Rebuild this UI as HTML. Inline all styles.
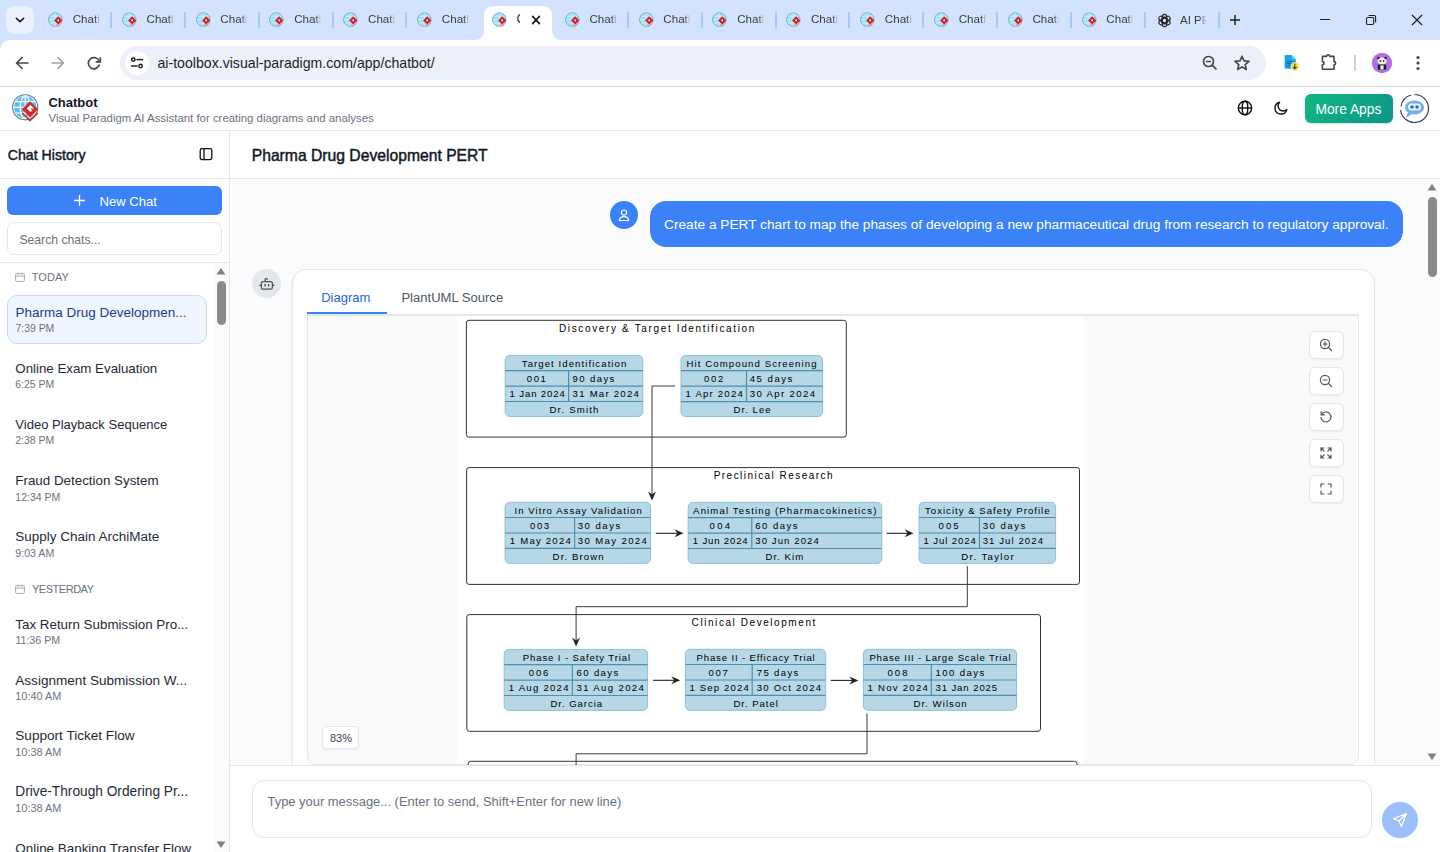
<!DOCTYPE html><html><head><meta charset="utf-8"><style>
*{margin:0;padding:0;box-sizing:border-box}
html,body{width:1440px;height:852px;overflow:hidden;background:#fff;font-family:"Liberation Sans",sans-serif}
.t{position:absolute;white-space:nowrap;line-height:1}
.b{position:absolute}
svg{position:absolute;overflow:visible}
</style></head><body>
<div class="b" style="left:0px;top:0px;width:1440px;height:40px;background:#d3e3fd"></div>
<div class="b" style="left:6px;top:6px;width:28px;height:28px;background:#eaf1fd;border-radius:8px"></div>
<svg style="left:0;top:0" width="40" height="40"><path d="M16.4 18.3 L20 21.7 L23.6 18.3" fill="none" stroke="#1f1f1f" stroke-width="1.6" stroke-linecap="round" stroke-linejoin="round"/></svg>
<svg style="left:48.00px;top:11.50px" width="16" height="16" viewBox="0 0 16 16"><circle cx="7.3" cy="7.6" r="6.8" fill="#9fe3fb" stroke="#7aa7bd" stroke-width="0.9"/><path d="M1 7.6H13.6M7.3 1V14.2M2.2 4.3H12.4M2.2 11H12.4" stroke="#d6f3fd" stroke-width="0.7"/><path d="M10.2 4.2L14.4 8.4L10.2 12.6L6 8.4Z" fill="#d61f26"/><path d="M6.4 11L10.2 14.8L14 11L10.2 13.2Z" fill="#f08a8a"/><path d="M9.4 7.6L11 7.6L11 9.2L9.4 9.2Z" fill="#fff"/></svg>
<div class="t" style="left:72.70px;top:11.2px;font-size:11.6px;line-height:16px;color:#3c3c3c;width:27px;overflow:hidden;-webkit-mask-image:linear-gradient(90deg,#000 80%,transparent 100%)">Chatbot</div>
<svg style="left:121.83px;top:11.50px" width="16" height="16" viewBox="0 0 16 16"><circle cx="7.3" cy="7.6" r="6.8" fill="#9fe3fb" stroke="#7aa7bd" stroke-width="0.9"/><path d="M1 7.6H13.6M7.3 1V14.2M2.2 4.3H12.4M2.2 11H12.4" stroke="#d6f3fd" stroke-width="0.7"/><path d="M10.2 4.2L14.4 8.4L10.2 12.6L6 8.4Z" fill="#d61f26"/><path d="M6.4 11L10.2 14.8L14 11L10.2 13.2Z" fill="#f08a8a"/><path d="M9.4 7.6L11 7.6L11 9.2L9.4 9.2Z" fill="#fff"/></svg>
<div class="t" style="left:146.53px;top:11.2px;font-size:11.6px;line-height:16px;color:#3c3c3c;width:27px;overflow:hidden;-webkit-mask-image:linear-gradient(90deg,#000 80%,transparent 100%)">Chatbot</div>
<svg style="left:195.66px;top:11.50px" width="16" height="16" viewBox="0 0 16 16"><circle cx="7.3" cy="7.6" r="6.8" fill="#9fe3fb" stroke="#7aa7bd" stroke-width="0.9"/><path d="M1 7.6H13.6M7.3 1V14.2M2.2 4.3H12.4M2.2 11H12.4" stroke="#d6f3fd" stroke-width="0.7"/><path d="M10.2 4.2L14.4 8.4L10.2 12.6L6 8.4Z" fill="#d61f26"/><path d="M6.4 11L10.2 14.8L14 11L10.2 13.2Z" fill="#f08a8a"/><path d="M9.4 7.6L11 7.6L11 9.2L9.4 9.2Z" fill="#fff"/></svg>
<div class="t" style="left:220.36px;top:11.2px;font-size:11.6px;line-height:16px;color:#3c3c3c;width:27px;overflow:hidden;-webkit-mask-image:linear-gradient(90deg,#000 80%,transparent 100%)">Chatbot</div>
<svg style="left:269.49px;top:11.50px" width="16" height="16" viewBox="0 0 16 16"><circle cx="7.3" cy="7.6" r="6.8" fill="#9fe3fb" stroke="#7aa7bd" stroke-width="0.9"/><path d="M1 7.6H13.6M7.3 1V14.2M2.2 4.3H12.4M2.2 11H12.4" stroke="#d6f3fd" stroke-width="0.7"/><path d="M10.2 4.2L14.4 8.4L10.2 12.6L6 8.4Z" fill="#d61f26"/><path d="M6.4 11L10.2 14.8L14 11L10.2 13.2Z" fill="#f08a8a"/><path d="M9.4 7.6L11 7.6L11 9.2L9.4 9.2Z" fill="#fff"/></svg>
<div class="t" style="left:294.19px;top:11.2px;font-size:11.6px;line-height:16px;color:#3c3c3c;width:27px;overflow:hidden;-webkit-mask-image:linear-gradient(90deg,#000 80%,transparent 100%)">Chatbot</div>
<svg style="left:343.32px;top:11.50px" width="16" height="16" viewBox="0 0 16 16"><circle cx="7.3" cy="7.6" r="6.8" fill="#9fe3fb" stroke="#7aa7bd" stroke-width="0.9"/><path d="M1 7.6H13.6M7.3 1V14.2M2.2 4.3H12.4M2.2 11H12.4" stroke="#d6f3fd" stroke-width="0.7"/><path d="M10.2 4.2L14.4 8.4L10.2 12.6L6 8.4Z" fill="#d61f26"/><path d="M6.4 11L10.2 14.8L14 11L10.2 13.2Z" fill="#f08a8a"/><path d="M9.4 7.6L11 7.6L11 9.2L9.4 9.2Z" fill="#fff"/></svg>
<div class="t" style="left:368.02px;top:11.2px;font-size:11.6px;line-height:16px;color:#3c3c3c;width:27px;overflow:hidden;-webkit-mask-image:linear-gradient(90deg,#000 80%,transparent 100%)">Chatbot</div>
<svg style="left:417.15px;top:11.50px" width="16" height="16" viewBox="0 0 16 16"><circle cx="7.3" cy="7.6" r="6.8" fill="#9fe3fb" stroke="#7aa7bd" stroke-width="0.9"/><path d="M1 7.6H13.6M7.3 1V14.2M2.2 4.3H12.4M2.2 11H12.4" stroke="#d6f3fd" stroke-width="0.7"/><path d="M10.2 4.2L14.4 8.4L10.2 12.6L6 8.4Z" fill="#d61f26"/><path d="M6.4 11L10.2 14.8L14 11L10.2 13.2Z" fill="#f08a8a"/><path d="M9.4 7.6L11 7.6L11 9.2L9.4 9.2Z" fill="#fff"/></svg>
<div class="t" style="left:441.85px;top:11.2px;font-size:11.6px;line-height:16px;color:#3c3c3c;width:27px;overflow:hidden;-webkit-mask-image:linear-gradient(90deg,#000 80%,transparent 100%)">Chatbot</div>
<svg style="left:564.81px;top:11.50px" width="16" height="16" viewBox="0 0 16 16"><circle cx="7.3" cy="7.6" r="6.8" fill="#9fe3fb" stroke="#7aa7bd" stroke-width="0.9"/><path d="M1 7.6H13.6M7.3 1V14.2M2.2 4.3H12.4M2.2 11H12.4" stroke="#d6f3fd" stroke-width="0.7"/><path d="M10.2 4.2L14.4 8.4L10.2 12.6L6 8.4Z" fill="#d61f26"/><path d="M6.4 11L10.2 14.8L14 11L10.2 13.2Z" fill="#f08a8a"/><path d="M9.4 7.6L11 7.6L11 9.2L9.4 9.2Z" fill="#fff"/></svg>
<div class="t" style="left:589.51px;top:11.2px;font-size:11.6px;line-height:16px;color:#3c3c3c;width:27px;overflow:hidden;-webkit-mask-image:linear-gradient(90deg,#000 80%,transparent 100%)">Chatbot</div>
<svg style="left:638.64px;top:11.50px" width="16" height="16" viewBox="0 0 16 16"><circle cx="7.3" cy="7.6" r="6.8" fill="#9fe3fb" stroke="#7aa7bd" stroke-width="0.9"/><path d="M1 7.6H13.6M7.3 1V14.2M2.2 4.3H12.4M2.2 11H12.4" stroke="#d6f3fd" stroke-width="0.7"/><path d="M10.2 4.2L14.4 8.4L10.2 12.6L6 8.4Z" fill="#d61f26"/><path d="M6.4 11L10.2 14.8L14 11L10.2 13.2Z" fill="#f08a8a"/><path d="M9.4 7.6L11 7.6L11 9.2L9.4 9.2Z" fill="#fff"/></svg>
<div class="t" style="left:663.34px;top:11.2px;font-size:11.6px;line-height:16px;color:#3c3c3c;width:27px;overflow:hidden;-webkit-mask-image:linear-gradient(90deg,#000 80%,transparent 100%)">Chatbot</div>
<svg style="left:712.47px;top:11.50px" width="16" height="16" viewBox="0 0 16 16"><circle cx="7.3" cy="7.6" r="6.8" fill="#9fe3fb" stroke="#7aa7bd" stroke-width="0.9"/><path d="M1 7.6H13.6M7.3 1V14.2M2.2 4.3H12.4M2.2 11H12.4" stroke="#d6f3fd" stroke-width="0.7"/><path d="M10.2 4.2L14.4 8.4L10.2 12.6L6 8.4Z" fill="#d61f26"/><path d="M6.4 11L10.2 14.8L14 11L10.2 13.2Z" fill="#f08a8a"/><path d="M9.4 7.6L11 7.6L11 9.2L9.4 9.2Z" fill="#fff"/></svg>
<div class="t" style="left:737.17px;top:11.2px;font-size:11.6px;line-height:16px;color:#3c3c3c;width:27px;overflow:hidden;-webkit-mask-image:linear-gradient(90deg,#000 80%,transparent 100%)">Chatbot</div>
<svg style="left:786.30px;top:11.50px" width="16" height="16" viewBox="0 0 16 16"><circle cx="7.3" cy="7.6" r="6.8" fill="#9fe3fb" stroke="#7aa7bd" stroke-width="0.9"/><path d="M1 7.6H13.6M7.3 1V14.2M2.2 4.3H12.4M2.2 11H12.4" stroke="#d6f3fd" stroke-width="0.7"/><path d="M10.2 4.2L14.4 8.4L10.2 12.6L6 8.4Z" fill="#d61f26"/><path d="M6.4 11L10.2 14.8L14 11L10.2 13.2Z" fill="#f08a8a"/><path d="M9.4 7.6L11 7.6L11 9.2L9.4 9.2Z" fill="#fff"/></svg>
<div class="t" style="left:811.00px;top:11.2px;font-size:11.6px;line-height:16px;color:#3c3c3c;width:27px;overflow:hidden;-webkit-mask-image:linear-gradient(90deg,#000 80%,transparent 100%)">Chatbot</div>
<svg style="left:860.13px;top:11.50px" width="16" height="16" viewBox="0 0 16 16"><circle cx="7.3" cy="7.6" r="6.8" fill="#9fe3fb" stroke="#7aa7bd" stroke-width="0.9"/><path d="M1 7.6H13.6M7.3 1V14.2M2.2 4.3H12.4M2.2 11H12.4" stroke="#d6f3fd" stroke-width="0.7"/><path d="M10.2 4.2L14.4 8.4L10.2 12.6L6 8.4Z" fill="#d61f26"/><path d="M6.4 11L10.2 14.8L14 11L10.2 13.2Z" fill="#f08a8a"/><path d="M9.4 7.6L11 7.6L11 9.2L9.4 9.2Z" fill="#fff"/></svg>
<div class="t" style="left:884.83px;top:11.2px;font-size:11.6px;line-height:16px;color:#3c3c3c;width:27px;overflow:hidden;-webkit-mask-image:linear-gradient(90deg,#000 80%,transparent 100%)">Chatbot</div>
<svg style="left:933.96px;top:11.50px" width="16" height="16" viewBox="0 0 16 16"><circle cx="7.3" cy="7.6" r="6.8" fill="#9fe3fb" stroke="#7aa7bd" stroke-width="0.9"/><path d="M1 7.6H13.6M7.3 1V14.2M2.2 4.3H12.4M2.2 11H12.4" stroke="#d6f3fd" stroke-width="0.7"/><path d="M10.2 4.2L14.4 8.4L10.2 12.6L6 8.4Z" fill="#d61f26"/><path d="M6.4 11L10.2 14.8L14 11L10.2 13.2Z" fill="#f08a8a"/><path d="M9.4 7.6L11 7.6L11 9.2L9.4 9.2Z" fill="#fff"/></svg>
<div class="t" style="left:958.66px;top:11.2px;font-size:11.6px;line-height:16px;color:#3c3c3c;width:27px;overflow:hidden;-webkit-mask-image:linear-gradient(90deg,#000 80%,transparent 100%)">Chatbot</div>
<svg style="left:1007.79px;top:11.50px" width="16" height="16" viewBox="0 0 16 16"><circle cx="7.3" cy="7.6" r="6.8" fill="#9fe3fb" stroke="#7aa7bd" stroke-width="0.9"/><path d="M1 7.6H13.6M7.3 1V14.2M2.2 4.3H12.4M2.2 11H12.4" stroke="#d6f3fd" stroke-width="0.7"/><path d="M10.2 4.2L14.4 8.4L10.2 12.6L6 8.4Z" fill="#d61f26"/><path d="M6.4 11L10.2 14.8L14 11L10.2 13.2Z" fill="#f08a8a"/><path d="M9.4 7.6L11 7.6L11 9.2L9.4 9.2Z" fill="#fff"/></svg>
<div class="t" style="left:1032.49px;top:11.2px;font-size:11.6px;line-height:16px;color:#3c3c3c;width:27px;overflow:hidden;-webkit-mask-image:linear-gradient(90deg,#000 80%,transparent 100%)">Chatbot</div>
<svg style="left:1081.62px;top:11.50px" width="16" height="16" viewBox="0 0 16 16"><circle cx="7.3" cy="7.6" r="6.8" fill="#9fe3fb" stroke="#7aa7bd" stroke-width="0.9"/><path d="M1 7.6H13.6M7.3 1V14.2M2.2 4.3H12.4M2.2 11H12.4" stroke="#d6f3fd" stroke-width="0.7"/><path d="M10.2 4.2L14.4 8.4L10.2 12.6L6 8.4Z" fill="#d61f26"/><path d="M6.4 11L10.2 14.8L14 11L10.2 13.2Z" fill="#f08a8a"/><path d="M9.4 7.6L11 7.6L11 9.2L9.4 9.2Z" fill="#fff"/></svg>
<div class="t" style="left:1106.32px;top:11.2px;font-size:11.6px;line-height:16px;color:#3c3c3c;width:27px;overflow:hidden;-webkit-mask-image:linear-gradient(90deg,#000 80%,transparent 100%)">Chatbot</div>
<div class="b" style="left:110.0px;top:12px;width:2px;height:16px;background:#a8c7fa;border-radius:1px"></div>
<div class="b" style="left:183.8px;top:12px;width:2px;height:16px;background:#a8c7fa;border-radius:1px"></div>
<div class="b" style="left:257.7px;top:12px;width:2px;height:16px;background:#a8c7fa;border-radius:1px"></div>
<div class="b" style="left:331.5px;top:12px;width:2px;height:16px;background:#a8c7fa;border-radius:1px"></div>
<div class="b" style="left:405.3px;top:12px;width:2px;height:16px;background:#a8c7fa;border-radius:1px"></div>
<div class="b" style="left:626.8px;top:12px;width:2px;height:16px;background:#a8c7fa;border-radius:1px"></div>
<div class="b" style="left:700.6px;top:12px;width:2px;height:16px;background:#a8c7fa;border-radius:1px"></div>
<div class="b" style="left:774.5px;top:12px;width:2px;height:16px;background:#a8c7fa;border-radius:1px"></div>
<div class="b" style="left:848.3px;top:12px;width:2px;height:16px;background:#a8c7fa;border-radius:1px"></div>
<div class="b" style="left:922.1px;top:12px;width:2px;height:16px;background:#a8c7fa;border-radius:1px"></div>
<div class="b" style="left:996.0px;top:12px;width:2px;height:16px;background:#a8c7fa;border-radius:1px"></div>
<div class="b" style="left:1069.8px;top:12px;width:2px;height:16px;background:#a8c7fa;border-radius:1px"></div>
<div class="b" style="left:1143.6px;top:12px;width:2px;height:16px;background:#a8c7fa;border-radius:1px"></div>
<div class="b" style="left:1217.5px;top:12px;width:2px;height:16px;background:#a8c7fa;border-radius:1px"></div>
<svg style="left:474px;top:6px" width="88" height="34" viewBox="0 0 88 34"><path d="M0 34 Q10 34 10 24 V10 Q10 0 20 0 H68 Q78 0 78 10 V24 Q78 34 88 34 Z" fill="#ffffff"/></svg>
<svg style="left:491.50px;top:11.50px" width="16" height="16" viewBox="0 0 16 16"><circle cx="7.3" cy="7.6" r="6.8" fill="#9fe3fb" stroke="#7aa7bd" stroke-width="0.9"/><path d="M1 7.6H13.6M7.3 1V14.2M2.2 4.3H12.4M2.2 11H12.4" stroke="#d6f3fd" stroke-width="0.7"/><path d="M10.2 4.2L14.4 8.4L10.2 12.6L6 8.4Z" fill="#d61f26"/><path d="M6.4 11L10.2 14.8L14 11L10.2 13.2Z" fill="#f08a8a"/><path d="M9.4 7.6L11 7.6L11 9.2L9.4 9.2Z" fill="#fff"/></svg>
<div class="t" style="left:516.6px;top:11px;font-size:12.5px;line-height:16px;color:#1f1f1f;width:3.6px;overflow:hidden">C</div>
<svg style="left:530px;top:14px" width="12" height="12"><path d="M2.6 2.4L9.4 9.6M9.4 2.4L2.6 9.6" stroke="#1f1f1f" stroke-width="1.7" stroke-linecap="round"/></svg>
<svg style="left:1154.5px;top:10.5px" width="19" height="19" viewBox="0 0 24 24"><g fill="none" stroke="#2a2a2a" stroke-width="1.4"><rect x="9.2" y="4.2" width="5.6" height="12" rx="2.8" transform="rotate(0 12 12)"/><rect x="9.2" y="4.2" width="5.6" height="12" rx="2.8" transform="rotate(60 12 12)"/><rect x="9.2" y="4.2" width="5.6" height="12" rx="2.8" transform="rotate(120 12 12)"/><rect x="9.2" y="4.2" width="5.6" height="12" rx="2.8" transform="rotate(180 12 12)"/><rect x="9.2" y="4.2" width="5.6" height="12" rx="2.8" transform="rotate(240 12 12)"/><rect x="9.2" y="4.2" width="5.6" height="12" rx="2.8" transform="rotate(300 12 12)"/></g></svg>
<div class="t" style="left:1180px;top:12px;font-size:11.5px;line-height:16px;color:#3c3c3c;width:27px;overflow:hidden;-webkit-mask-image:linear-gradient(90deg,#000 70%,transparent 100%)">AI PE</div>
<svg style="left:1227px;top:12px" width="16" height="16"><path d="M8 3V13M3 8H13" stroke="#1f1f1f" stroke-width="1.5"/></svg>
<svg style="left:1318px;top:12px" width="16" height="16"><path d="M2 7.5H12" stroke="#1f1f1f" stroke-width="1"/></svg>
<svg style="left:1363px;top:12px" width="16" height="16"><rect x="3.5" y="5.5" width="7.2" height="7" rx="1.2" fill="none" stroke="#1f1f1f" stroke-width="1.1"/><path d="M5.6 3.5 H11 Q12.6 3.5 12.6 5.1 V10.4" fill="none" stroke="#1f1f1f" stroke-width="1.1"/></svg>
<svg style="left:1409px;top:12px" width="16" height="16"><path d="M3 3L13 13M13 3L3 13" stroke="#1f1f1f" stroke-width="1.2"/></svg>
<div class="b" style="left:0px;top:40px;width:20px;height:12px;background:#d3e3fd"></div>
<div class="b" style="left:0px;top:40px;width:1440px;height:46px;background:#ffffff;border-top-left-radius:10px"></div>
<div class="b" style="left:0px;top:86px;width:1440px;height:1px;background:#d6d9d6"></div>
<svg style="left:12px;top:53px" width="20" height="20" viewBox="0 0 20 20"><path d="M15.8 10H4.8M10 4.6L4.6 10L10 15.4" fill="none" stroke="#474747" stroke-width="1.6" stroke-linecap="square"/></svg>
<svg style="left:48px;top:53px" width="20" height="20" viewBox="0 0 20 20"><path d="M4.2 10H15.2M10 4.6L15.4 10L10 15.4" fill="none" stroke="#a3a3a3" stroke-width="1.6" stroke-linecap="square"/></svg>
<svg style="left:84px;top:53px" width="20" height="20" viewBox="0 0 20 20"><path d="M15.2 8.2A5.6 5.6 0 1 0 15.4 11.5" fill="none" stroke="#474747" stroke-width="1.7"/><path d="M16.3 4.2V8.9H11.6" fill="none" stroke="#474747" stroke-width="1.7"/></svg>
<div class="b" style="left:120px;top:46px;width:1146px;height:34px;background:#ecf0f9;border-radius:17px"></div>
<div class="b" style="left:125px;top:50.8px;width:24px;height:24px;background:#ffffff;border-radius:12px"></div>
<svg style="left:129px;top:55px" width="16" height="16" viewBox="0 0 16 16"><g fill="none" stroke="#1f1f1f" stroke-width="1.5"><circle cx="4.3" cy="4.6" r="1.7"/><path d="M7.5 4.6H14"/><circle cx="11.6" cy="11" r="1.7"/><path d="M2 11H8.6"/></g></svg>
<div class="t" style="left:157.50px;top:55.83px;font-size:14.144px;color:#1f1f1f;">ai-toolbox.visual-paradigm.com/app/chatbot/</div>
<svg style="left:1200px;top:53px" width="20" height="20" viewBox="0 0 20 20"><g fill="none" stroke="#474747" stroke-width="1.7"><circle cx="8.5" cy="8.5" r="5"/><path d="M12.2 12.2L16.5 16.5M6 8.5H11"/></g></svg>
<svg style="left:1232px;top:53px" width="20" height="20" viewBox="0 0 20 20"><path d="M10 3.2L12 7.9L17 8.3L13.2 11.6L14.3 16.5L10 13.9L5.7 16.5L6.8 11.6L3 8.3L8 7.9Z" fill="none" stroke="#474747" stroke-width="1.6" stroke-linejoin="round"/></svg>
<svg style="left:1281px;top:53px" width="20" height="20" viewBox="0 0 20 20"><path d="M4.8 2H10.6L14.8 6.2V15.2Q14.8 15.8 14.2 15.8H4.8Q3.6 15.8 3.6 14.6V3.2Q3.6 2 4.8 2Z" fill="#1aa3ea"/><path d="M10.6 2L14.8 6.2H10.6Z" fill="#3fe0d0"/><path d="M5.6 8.6H10.4M5.6 10.6H10.4M5.6 12.6H9" stroke="#0d5fa8" stroke-width="0.9"/><circle cx="13.8" cy="13.5" r="4.3" fill="#fde047"/><path d="M13.8 10.8V15.6M11.9 13.9L13.8 15.8L15.7 13.9" stroke="#1e3a5f" stroke-width="1.1" fill="none"/></svg>
<svg style="left:1318px;top:53px" width="20" height="20" viewBox="0 0 20 20"><path d="M4.4 3.4H8.6A1.6 1.6 0 0 1 11.8 3.4H16V8.6A1.6 1.6 0 0 1 16 11.8V16.2H4.4V11.8A1.6 1.6 0 0 0 4.4 8.6Z" fill="none" stroke="#474747" stroke-width="1.6" stroke-linejoin="round"/></svg>
<div class="b" style="left:1354px;top:55px;width:1.5px;height:16px;background:#c4d3ea"></div>
<svg style="left:1371px;top:52px" width="22" height="22" viewBox="0 0 22 22"><circle cx="11" cy="11" r="10.2" fill="#b46ee3"/><ellipse cx="11" cy="9" rx="4.6" ry="3.6" fill="#f2f2f2"/><circle cx="7.3" cy="6" r="1.3" fill="#222"/><circle cx="14.7" cy="6" r="1.3" fill="#222"/><circle cx="9.4" cy="9" r="0.9" fill="#333"/><circle cx="12.6" cy="9" r="0.9" fill="#333"/><path d="M6.8 12.6H15.2V17.6H6.8Z" fill="#1f1f1f"/><path d="M9.4 13.4H12.6V17.4H9.4Z" fill="#eeeeee"/></svg>
<svg style="left:1408px;top:53px" width="20" height="20" viewBox="0 0 20 20"><circle cx="10" cy="4.5" r="1.6" fill="#474747"/><circle cx="10" cy="10" r="1.6" fill="#474747"/><circle cx="10" cy="15.5" r="1.6" fill="#474747"/></svg>
<div class="b" style="left:0px;top:87px;width:1440px;height:43px;background:#fff"></div>
<div class="b" style="left:0px;top:130px;width:1440px;height:1px;background:#e5e7eb;box-shadow:0 1px 3px rgba(0,0,0,0.12)"></div>
<svg style="left:11px;top:93px" width="29" height="29" viewBox="0 0 29 29"><circle cx="14.2" cy="14.3" r="12.6" fill="#ffffff" stroke="#4f8199" stroke-width="1.1"/><circle cx="14.2" cy="14.3" r="11.2" fill="#62bff0"/><g stroke="#ffffff" stroke-width="1.2" fill="none"><ellipse cx="14.2" cy="14.3" rx="5" ry="11.2"/><path d="M14.2 3V25.5M3 14.3H25.4M4.6 8.6H23.8M4.6 20H23.8"/></g><path d="M19 8.2L27.2 16.2L19 24.2L10.8 16.2Z" fill="#d32a2a"/><path d="M19.4 11.8L23 15.4L19.4 19L15.8 15.4Z" fill="#ffffff"/><path d="M19.4 15.4L23 15.4L21.2 17.2Z" fill="#d32a2a"/><path d="M11.2 20L19 27.6L26.8 20" fill="none" stroke="#d32a2a" stroke-width="1.7"/></svg>
<div class="t" style="left:48.50px;top:97.02px;font-size:12.975px;color:#111827;font-weight:700;">Chatbot</div>
<div class="t" style="left:48.50px;top:113.35px;font-size:11.401px;color:#6b7280;">Visual Paradigm AI Assistant for creating diagrams and analyses</div>
<svg style="left:1236px;top:99px" width="18" height="18" viewBox="0 0 18 18"><g fill="none" stroke="#111" stroke-width="1.4"><circle cx="9" cy="9" r="6.7"/><ellipse cx="9" cy="9" rx="2.8" ry="6.7"/><path d="M2.3 9H15.7"/></g></svg>
<svg style="left:1272px;top:99px" width="18" height="18" viewBox="0 0 18 18"><path d="M14.8 10.6A6 6 0 1 1 7.6 3.2A4.6 4.6 0 0 0 14.8 10.6Z" fill="none" stroke="#111" stroke-width="1.4" stroke-linejoin="round"/></svg>
<div class="b" style="left:1305px;top:94px;width:88px;height:29px;background:linear-gradient(135deg,#10b981,#0d9488);border-radius:6px;box-shadow:0 1px 2px rgba(0,0,0,.15)"></div>
<div class="t" style="left:1315.40px;top:102.81px;font-size:13.808px;color:#ffffff;">More Apps</div>
<svg style="left:1399px;top:93px" width="31" height="31" viewBox="0 0 31 31"><path d="M15.5 1.5A14 14 0 1 1 1.6 17" fill="none" stroke="#374151" stroke-width="1.2"/><path d="M2 13.5A14 14 0 0 1 12 2" fill="none" stroke="#374151" stroke-width="1.2"/><ellipse cx="15.5" cy="14.5" rx="9.5" ry="7" fill="#6fb0e8"/><path d="M9 19L7 25L13 21Z" fill="#6fb0e8"/><rect x="9" y="10.5" width="13" height="7" rx="3.5" fill="#e8f2fb"/><circle cx="13" cy="14" r="1.8" fill="#2f6fa8"/><circle cx="18" cy="14" r="1.8" fill="#2f6fa8"/></svg>
<div class="b" style="left:0px;top:131px;width:229px;height:721px;background:#ffffff"></div>
<div class="b" style="left:229px;top:131px;width:1px;height:721px;background:#e5e7eb"></div>
<div class="t" style="left:7.75px;top:147.90px;font-size:14.179px;color:#111827;-webkit-text-stroke:0.45px #111827;">Chat History</div>
<svg style="left:198px;top:146px" width="16" height="16" viewBox="0 0 16 16"><rect x="2.2" y="2.6" width="11.6" height="11" rx="1.8" fill="none" stroke="#111" stroke-width="1.3"/><path d="M6 2.6V13.6" stroke="#111" stroke-width="1.3"/></svg>
<div class="b" style="left:0px;top:178px;width:229px;height:1px;background:#e5e7eb"></div>
<div class="b" style="left:7px;top:186px;width:215px;height:29px;background:#3b82f6;border-radius:6px"></div>
<svg style="left:73px;top:194px" width="13" height="13" viewBox="0 0 13 13"><path d="M6.5 1V12M1 6.5H12" stroke="#fff" stroke-width="1.3"/></svg>
<div class="t" style="left:99.50px;top:194.95px;font-size:13.051px;color:#ffffff;">New Chat</div>
<div class="b" style="left:7px;top:222px;width:215px;height:33px;background:#fff;border:1px solid #e5e7eb;border-radius:7px"></div>
<div class="t" style="left:19.40px;top:234.27px;font-size:12.205px;color:#6b7280;">Search chats...</div>
<div class="b" style="left:0px;top:262px;width:229px;height:1px;background:#e5e7eb"></div>
<svg style="left:14.5px;top:272px" width="10" height="10" viewBox="0 0 10 10"><rect x="0.6" y="1.6" width="8.8" height="7.8" rx="1" fill="none" stroke="#9ca3af" stroke-width="0.9"/><path d="M0.6 4H9.4M3 0.5V2.5M7 0.5V2.5" stroke="#9ca3af" stroke-width="0.9"/></svg>
<div class="t" style="left:31.80px;top:271.69px;font-size:11.000px;color:#6b7280;letter-spacing:0.031px;">TODAY</div>
<div class="b" style="left:7px;top:295px;width:200px;height:49px;background:#eff6ff;border:1px solid #bfdbfe;border-radius:10px"></div>
<div class="t" style="left:15.50px;top:305.98px;font-size:13.495px;color:#1e3a8a;">Pharma Drug Developmen...</div>
<div class="t" style="left:15.50px;top:324.18px;font-size:10.419px;color:#6b7280;">7:39 PM</div>
<div class="t" style="left:15.30px;top:361.74px;font-size:13.306px;color:#1f2937;">Online Exam Evaluation</div>
<div class="t" style="left:15.30px;top:379.63px;font-size:10.473px;color:#6b7280;">6:25 PM</div>
<div class="t" style="left:15.30px;top:417.96px;font-size:13.040px;color:#1f2937;">Video Playback Sequence</div>
<div class="t" style="left:15.30px;top:435.63px;font-size:10.473px;color:#6b7280;">2:38 PM</div>
<div class="t" style="left:15.30px;top:473.67px;font-size:13.379px;color:#1f2937;">Fraud Detection System</div>
<div class="t" style="left:15.30px;top:491.60px;font-size:10.514px;color:#6b7280;">12:34 PM</div>
<div class="t" style="left:15.30px;top:529.58px;font-size:13.493px;color:#1f2937;">Supply Chain ArchiMate</div>
<div class="t" style="left:15.30px;top:547.50px;font-size:10.630px;color:#6b7280;">9:03 AM</div>
<svg style="left:14.5px;top:584px" width="10" height="10" viewBox="0 0 10 10"><rect x="0.6" y="1.6" width="8.8" height="7.8" rx="1" fill="none" stroke="#9ca3af" stroke-width="0.9"/><path d="M0.6 4H9.4M3 0.5V2.5M7 0.5V2.5" stroke="#9ca3af" stroke-width="0.9"/></svg>
<div class="t" style="left:32.00px;top:584.09px;font-size:11.000px;color:#6b7280;letter-spacing:-0.477px;">YESTERDAY</div>
<div class="t" style="left:15.30px;top:617.69px;font-size:13.360px;color:#1f2937;">Tax Return Submission Pro...</div>
<div class="t" style="left:15.30px;top:635.44px;font-size:10.700px;color:#6b7280;">11:36 PM</div>
<div class="t" style="left:15.30px;top:673.51px;font-size:13.574px;color:#1f2937;">Assignment Submission W...</div>
<div class="t" style="left:15.30px;top:691.28px;font-size:10.888px;color:#6b7280;">10:40 AM</div>
<div class="t" style="left:15.30px;top:729.49px;font-size:13.598px;color:#1f2937;">Support Ticket Flow</div>
<div class="t" style="left:15.30px;top:747.28px;font-size:10.888px;color:#6b7280;">10:38 AM</div>
<div class="t" style="left:15.30px;top:785.39px;font-size:13.714px;color:#1f2937;">Drive-Through Ordering Pr...</div>
<div class="t" style="left:15.30px;top:803.28px;font-size:10.888px;color:#6b7280;">10:38 AM</div>
<div class="t" style="left:15.30px;top:841.64px;font-size:13.418px;color:#1f2937;">Online Banking Transfer Flow</div>
<div class="t" style="left:15.30px;top:859.28px;font-size:10.888px;color:#6b7280;">10:36 AM</div>
<div class="b" style="left:214px;top:263px;width:15px;height:589px;background:#fbfbfb"></div>
<svg style="left:215px;top:266px" width="12" height="10"><path d="M1.5 8.5L6 2L10.5 8.5Z" fill="#808080"/></svg>
<div class="b" style="left:217px;top:281px;width:9px;height:44px;background:#8a8a8a;border-radius:5px"></div>
<svg style="left:215px;top:840px" width="12" height="10"><path d="M1.5 1.5L6 8L10.5 1.5Z" fill="#808080"/></svg>
<div class="b" style="left:230px;top:131px;width:1210px;height:47px;background:#fff"></div>
<div class="t" style="left:251.70px;top:147.90px;font-size:15.709px;color:#111827;-webkit-text-stroke:0.45px #111827;">Pharma Drug Development PERT</div>
<div class="b" style="left:230px;top:178px;width:1210px;height:1px;background:#e5e7eb"></div>
<div class="b" style="left:230px;top:179px;width:1195px;height:586px;background:#fbfcfd"></div>
<div class="b" style="left:1425px;top:179px;width:15px;height:586px;background:#fbfcfd"></div>
<svg style="left:1426px;top:182px" width="12" height="10"><path d="M1.5 8.5L6 2L10.5 8.5Z" fill="#808080"/></svg>
<div class="b" style="left:1428px;top:197px;width:9px;height:80px;background:#8a8a8a;border-radius:5px"></div>
<svg style="left:1426px;top:752px" width="12" height="10"><path d="M1.5 1.5L6 8L10.5 1.5Z" fill="#808080"/></svg>
<div class="b" style="left:610px;top:201px;width:28px;height:28px;background:#3b82f6;border-radius:14px"></div>
<svg style="left:617px;top:208px" width="14" height="14" viewBox="0 0 14 14"><g fill="none" stroke="#fff" stroke-width="1.2"><circle cx="7" cy="4.6" r="2.6"/><path d="M2.5 12.5Q2.5 8.6 7 8.6Q11.5 8.6 11.5 12.5Z"/></g></svg>
<div class="b" style="left:650px;top:201px;width:753px;height:46px;background:#3b82f6;border-radius:16px"></div>
<div class="t" style="left:664.00px;top:218.41px;font-size:13.697px;color:#ffffff;">Create a PERT chart to map the phases of developing a new pharmaceutical drug from research to regulatory approval.</div>
<div class="b" style="left:252px;top:269px;width:29px;height:29px;background:#e5e7eb;border-radius:15px"></div>
<svg style="left:258px;top:274.5px" width="18" height="18" viewBox="0 0 18 18"><g fill="none" stroke="#4b5563" stroke-width="1.3" stroke-linejoin="round"><rect x="3.4" y="6.6" width="11" height="7.6" rx="1.6"/><path d="M7.2 6.6V3.8H10M1.3 10.4H3.4M14.4 10.4H16.5M7 9V11.6M10.6 9V11.6"/></g></svg>
<div class="b" style="left:292px;top:269px;width:1083px;height:520px;background:#fff;border:1px solid #e5e7eb;border-radius:14px;box-shadow:0 1px 3px rgba(0,0,0,0.06)"></div>
<div class="t" style="left:321.20px;top:291.36px;font-size:13.047px;color:#2563eb;">Diagram</div>
<div class="t" style="left:401.40px;top:291.35px;font-size:13.052px;color:#4b5563;">PlantUML Source</div>
<div class="b" style="left:307px;top:314px;width:1052px;height:2px;background:#e5e7eb"></div>
<div class="b" style="left:307px;top:312px;width:80px;height:2px;background:#3b82f6"></div>
<div class="b" style="left:307px;top:316px;width:1052px;height:449px;background:#f9fafb;border:1px solid #e5e7eb;border-top:none;border-radius:0 0 9px 9px;overflow:hidden"></div>
<div class="b" style="left:458px;top:316px;width:626px;height:448px;background:#ffffff"></div>
<svg style="left:458px;top:316px" width="626" height="448" viewBox="458 316 626 448" font-family="Liberation Sans, sans-serif" fill="#000"><g><rect x="466.4" y="320.3" width="379.9" height="116.8" rx="2.5" fill="none" stroke="#333" stroke-width="1"/><text x="558.9" y="331.8" textLength="195.4" lengthAdjust="spacing" font-size="10">Discovery &amp; Target Identification</text><rect x="466.6" y="467.6" width="612.9" height="116.8" rx="2.5" fill="none" stroke="#333" stroke-width="1"/><text x="713.7" y="479.1" textLength="118.8" lengthAdjust="spacing" font-size="10">Preclinical Research</text><rect x="466.8" y="614.6" width="573.7" height="116.7" rx="2.5" fill="none" stroke="#333" stroke-width="1"/><text x="691.6" y="626.1" textLength="123.7" lengthAdjust="spacing" font-size="10">Clinical Development</text><rect x="468.2" y="761.3" width="608.8" height="138.7" rx="2.5" fill="none" stroke="#333" stroke-width="1"/><rect x="505.2" y="355.4" width="137.6" height="61" rx="4.5" fill="#b6d7e6" stroke="#8ebfd6" stroke-width="1"/><line x1="505.2" x2="642.8" y1="370.6" y2="370.6" stroke="#4f8fae" stroke-width="1.2"/><line x1="505.2" x2="642.8" y1="386.1" y2="386.1" stroke="#4f8fae" stroke-width="1.2"/><line x1="505.2" x2="642.8" y1="401.5" y2="401.5" stroke="#4f8fae" stroke-width="1.2"/><line x1="568.6" x2="568.6" y1="370.6" y2="401.5" stroke="#4f8fae" stroke-width="1.2"/><text x="521.8" y="366.9" textLength="104.5" lengthAdjust="spacing" font-size="9.6">Target Identification</text><text x="526.7" y="381.8" textLength="19.2" lengthAdjust="spacing" font-size="9.6">001</text><text x="572.6" y="381.8" textLength="41.8" lengthAdjust="spacing" font-size="9.6">90 days</text><text x="509.6" y="397.0" textLength="55.2" lengthAdjust="spacing" font-size="9.6">1 Jan 2024</text><text x="572.6" y="397.0" textLength="66.2" lengthAdjust="spacing" font-size="9.6">31 Mar 2024</text><text x="549.5" y="412.6" textLength="48.9" lengthAdjust="spacing" font-size="9.6">Dr. Smith</text><rect x="681.0" y="355.5" width="141.6" height="61" rx="4.5" fill="#b6d7e6" stroke="#8ebfd6" stroke-width="1"/><line x1="681.0" x2="822.6" y1="370.7" y2="370.7" stroke="#4f8fae" stroke-width="1.2"/><line x1="681.0" x2="822.6" y1="386.2" y2="386.2" stroke="#4f8fae" stroke-width="1.2"/><line x1="681.0" x2="822.6" y1="401.6" y2="401.6" stroke="#4f8fae" stroke-width="1.2"/><line x1="746.5" x2="746.5" y1="370.7" y2="401.6" stroke="#4f8fae" stroke-width="1.2"/><text x="686.6" y="367.0" textLength="129.9" lengthAdjust="spacing" font-size="9.6">Hit Compound Screening</text><text x="703.9" y="381.9" textLength="19.4" lengthAdjust="spacing" font-size="9.6">002</text><text x="749.7" y="381.9" textLength="42.6" lengthAdjust="spacing" font-size="9.6">45 days</text><text x="685.5" y="397.1" textLength="57.3" lengthAdjust="spacing" font-size="9.6">1 Apr 2024</text><text x="749.7" y="397.1" textLength="65.3" lengthAdjust="spacing" font-size="9.6">30 Apr 2024</text><text x="733.5" y="412.7" textLength="37.1" lengthAdjust="spacing" font-size="9.6">Dr. Lee</text><rect x="505.1" y="502.3" width="145.5" height="61" rx="4.5" fill="#b6d7e6" stroke="#8ebfd6" stroke-width="1"/><line x1="505.1" x2="650.6" y1="517.5" y2="517.5" stroke="#4f8fae" stroke-width="1.2"/><line x1="505.1" x2="650.6" y1="533.0" y2="533.0" stroke="#4f8fae" stroke-width="1.2"/><line x1="505.1" x2="650.6" y1="548.4" y2="548.4" stroke="#4f8fae" stroke-width="1.2"/><line x1="574.6" x2="574.6" y1="517.5" y2="548.4" stroke="#4f8fae" stroke-width="1.2"/><text x="514.5" y="513.8" textLength="127.3" lengthAdjust="spacing" font-size="9.6">In Vitro Assay Validation</text><text x="529.9" y="528.7" textLength="19.3" lengthAdjust="spacing" font-size="9.6">003</text><text x="577.7" y="528.7" textLength="42.5" lengthAdjust="spacing" font-size="9.6">30 days</text><text x="509.8" y="543.9" textLength="61.0" lengthAdjust="spacing" font-size="9.6">1 May 2024</text><text x="577.7" y="543.9" textLength="69.2" lengthAdjust="spacing" font-size="9.6">30 May 2024</text><text x="552.6" y="559.5" textLength="51.1" lengthAdjust="spacing" font-size="9.6">Dr. Brown</text><rect x="688.2" y="502.4" width="193.6" height="61" rx="4.5" fill="#b6d7e6" stroke="#8ebfd6" stroke-width="1"/><line x1="688.2" x2="881.8" y1="517.6" y2="517.6" stroke="#4f8fae" stroke-width="1.2"/><line x1="688.2" x2="881.8" y1="533.1" y2="533.1" stroke="#4f8fae" stroke-width="1.2"/><line x1="688.2" x2="881.8" y1="548.5" y2="548.5" stroke="#4f8fae" stroke-width="1.2"/><line x1="751.8" x2="751.8" y1="517.6" y2="548.5" stroke="#4f8fae" stroke-width="1.2"/><text x="693.1" y="513.9" textLength="183.3" lengthAdjust="spacing" font-size="9.6">Animal Testing (Pharmacokinetics)</text><text x="709.6" y="528.8" textLength="20.5" lengthAdjust="spacing" font-size="9.6">004</text><text x="755.3" y="528.8" textLength="42.2" lengthAdjust="spacing" font-size="9.6">60 days</text><text x="692.8" y="544.0" textLength="54.9" lengthAdjust="spacing" font-size="9.6">1 Jun 2024</text><text x="755.3" y="544.0" textLength="63.5" lengthAdjust="spacing" font-size="9.6">30 Jun 2024</text><text x="765.4" y="559.6" textLength="37.8" lengthAdjust="spacing" font-size="9.6">Dr. Kim</text><rect x="919.1" y="502.3" width="136.5" height="61" rx="4.5" fill="#b6d7e6" stroke="#8ebfd6" stroke-width="1"/><line x1="919.1" x2="1055.6" y1="517.5" y2="517.5" stroke="#4f8fae" stroke-width="1.2"/><line x1="919.1" x2="1055.6" y1="533.0" y2="533.0" stroke="#4f8fae" stroke-width="1.2"/><line x1="919.1" x2="1055.6" y1="548.4" y2="548.4" stroke="#4f8fae" stroke-width="1.2"/><line x1="979.5" x2="979.5" y1="517.5" y2="548.4" stroke="#4f8fae" stroke-width="1.2"/><text x="925.0" y="513.8" textLength="124.6" lengthAdjust="spacing" font-size="9.6">Toxicity &amp; Safety Profile</text><text x="938.6" y="528.7" textLength="19.9" lengthAdjust="spacing" font-size="9.6">005</text><text x="982.7" y="528.7" textLength="42.5" lengthAdjust="spacing" font-size="9.6">30 days</text><text x="923.6" y="543.9" textLength="52.2" lengthAdjust="spacing" font-size="9.6">1 Jul 2024</text><text x="982.7" y="543.9" textLength="60.3" lengthAdjust="spacing" font-size="9.6">31 Jul 2024</text><text x="961.3" y="559.5" textLength="52.4" lengthAdjust="spacing" font-size="9.6">Dr. Taylor</text><rect x="504.2" y="649.4" width="143.4" height="61" rx="4.5" fill="#b6d7e6" stroke="#8ebfd6" stroke-width="1"/><line x1="504.2" x2="647.6" y1="664.6" y2="664.6" stroke="#4f8fae" stroke-width="1.2"/><line x1="504.2" x2="647.6" y1="680.1" y2="680.1" stroke="#4f8fae" stroke-width="1.2"/><line x1="504.2" x2="647.6" y1="695.5" y2="695.5" stroke="#4f8fae" stroke-width="1.2"/><line x1="572.4" x2="572.4" y1="664.6" y2="695.5" stroke="#4f8fae" stroke-width="1.2"/><text x="522.7" y="660.9" textLength="107.4" lengthAdjust="spacing" font-size="9.6">Phase I - Safety Trial</text><text x="528.8" y="675.8" textLength="19.5" lengthAdjust="spacing" font-size="9.6">006</text><text x="576.5" y="675.8" textLength="41.7" lengthAdjust="spacing" font-size="9.6">60 days</text><text x="508.7" y="691.0" textLength="59.8" lengthAdjust="spacing" font-size="9.6">1 Aug 2024</text><text x="576.5" y="691.0" textLength="67.4" lengthAdjust="spacing" font-size="9.6">31 Aug 2024</text><text x="550.4" y="706.6" textLength="51.8" lengthAdjust="spacing" font-size="9.6">Dr. Garcia</text><rect x="685.4" y="649.3" width="140.3" height="61" rx="4.5" fill="#b6d7e6" stroke="#8ebfd6" stroke-width="1"/><line x1="685.4" x2="825.7" y1="664.5" y2="664.5" stroke="#4f8fae" stroke-width="1.2"/><line x1="685.4" x2="825.7" y1="680.0" y2="680.0" stroke="#4f8fae" stroke-width="1.2"/><line x1="685.4" x2="825.7" y1="695.4" y2="695.4" stroke="#4f8fae" stroke-width="1.2"/><line x1="752.2" x2="752.2" y1="664.5" y2="695.4" stroke="#4f8fae" stroke-width="1.2"/><text x="696.5" y="660.8" textLength="118.2" lengthAdjust="spacing" font-size="9.6">Phase II - Efficacy Trial</text><text x="708.5" y="675.7" textLength="19.4" lengthAdjust="spacing" font-size="9.6">007</text><text x="756.8" y="675.7" textLength="41.5" lengthAdjust="spacing" font-size="9.6">75 days</text><text x="689.4" y="690.9" textLength="59.4" lengthAdjust="spacing" font-size="9.6">1 Sep 2024</text><text x="756.8" y="690.9" textLength="64.2" lengthAdjust="spacing" font-size="9.6">30 Oct 2024</text><text x="733.5" y="706.5" textLength="44.3" lengthAdjust="spacing" font-size="9.6">Dr. Patel</text><rect x="863.4" y="649.3" width="153.2" height="61" rx="4.5" fill="#b6d7e6" stroke="#8ebfd6" stroke-width="1"/><line x1="863.4" x2="1016.6" y1="664.5" y2="664.5" stroke="#4f8fae" stroke-width="1.2"/><line x1="863.4" x2="1016.6" y1="680.0" y2="680.0" stroke="#4f8fae" stroke-width="1.2"/><line x1="863.4" x2="1016.6" y1="695.4" y2="695.4" stroke="#4f8fae" stroke-width="1.2"/><line x1="931.4" x2="931.4" y1="664.5" y2="695.4" stroke="#4f8fae" stroke-width="1.2"/><text x="869.4" y="660.8" textLength="141.2" lengthAdjust="spacing" font-size="9.6">Phase III - Large Scale Trial</text><text x="887.5" y="675.7" textLength="20.0" lengthAdjust="spacing" font-size="9.6">008</text><text x="935.4" y="675.7" textLength="48.9" lengthAdjust="spacing" font-size="9.6">100 days</text><text x="867.6" y="690.9" textLength="60.2" lengthAdjust="spacing" font-size="9.6">1 Nov 2024</text><text x="935.4" y="690.9" textLength="61.8" lengthAdjust="spacing" font-size="9.6">31 Jan 2025</text><text x="913.4" y="706.5" textLength="53.3" lengthAdjust="spacing" font-size="9.6">Dr. Wilson</text><path d="M675.1 386 L652 386 L652 496" fill="none" stroke="#3a3a3a" stroke-width="1"/><path d="M652 500.5 L648 491.5 L652 494.5 L656 491.5Z" fill="#222"/><line x1="655.7" y1="533.3" x2="680.5" y2="533.3" stroke="#222" stroke-width="1.1"/><path d="M683.5 533.3 L674.5 529.3 L677.5 533.3 L674.5 537.3Z" fill="#222"/><line x1="886.7" y1="533.3" x2="910.6" y2="533.3" stroke="#222" stroke-width="1.1"/><path d="M913.6 533.3 L904.6 529.3 L907.6 533.3 L904.6 537.3Z" fill="#222"/><path d="M967.3 566.1 L967.3 606.7 L576.1 606.7 L576.1 642" fill="none" stroke="#3a3a3a" stroke-width="1"/><path d="M576.1 646.6 L572.1 637.6 L576.1 640.6 L580.1 637.6Z" fill="#222"/><line x1="653.1" y1="680.3" x2="677.2" y2="680.3" stroke="#222" stroke-width="1.1"/><path d="M680.2 680.3 L671.2 676.3 L674.2 680.3 L671.2 684.3Z" fill="#222"/><line x1="830.7" y1="680.4" x2="855.3" y2="680.4" stroke="#222" stroke-width="1.1"/><path d="M858.3 680.4 L849.3 676.4 L852.3 680.4 L849.3 684.4Z" fill="#222"/><path d="M867 713.3 L867 753.8 L576.1 753.8 L576.1 800" fill="none" stroke="#3a3a3a" stroke-width="1"/></g></svg>
<div class="b" style="left:1309px;top:331px;width:35px;height:28px;background:#fff;border:1px solid #e5e7eb;border-radius:6px;box-shadow:0 1px 2px rgba(0,0,0,.06)"></div>
<svg style="left:1318px;top:337px" width="16" height="16" viewBox="0 0 16 16"><g fill="none" stroke="#4b5563" stroke-width="1.2" stroke-linecap="round"><circle cx="7" cy="7" r="4.6"/><path d="M10.4 10.4L13.5 13.5M5 7H9M7 5V9"/></g></svg>
<div class="b" style="left:1309px;top:367px;width:35px;height:28px;background:#fff;border:1px solid #e5e7eb;border-radius:6px;box-shadow:0 1px 2px rgba(0,0,0,.06)"></div>
<svg style="left:1318px;top:373px" width="16" height="16" viewBox="0 0 16 16"><g fill="none" stroke="#4b5563" stroke-width="1.2" stroke-linecap="round"><circle cx="7" cy="7" r="4.6"/><path d="M10.4 10.4L13.5 13.5M5 7H9"/></g></svg>
<div class="b" style="left:1309px;top:403px;width:35px;height:28px;background:#fff;border:1px solid #e5e7eb;border-radius:6px;box-shadow:0 1px 2px rgba(0,0,0,.06)"></div>
<svg style="left:1318px;top:409px" width="16" height="16" viewBox="0 0 16 16"><g fill="none" stroke="#4b5563" stroke-width="1.2" stroke-linecap="round"><path d="M3.6 5.5A5 5 0 1 1 3 8.6"/><path d="M3.2 2.6V5.8H6.4"/></g></svg>
<div class="b" style="left:1309px;top:439px;width:35px;height:28px;background:#fff;border:1px solid #e5e7eb;border-radius:6px;box-shadow:0 1px 2px rgba(0,0,0,.06)"></div>
<svg style="left:1318px;top:445px" width="16" height="16" viewBox="0 0 16 16"><g fill="none" stroke="#4b5563" stroke-width="1.2" stroke-linecap="round"><path d="M3 3L6.2 6.2M3 3H6M3 3V6M13 3L9.8 6.2M13 3H10M13 3V6M3 13L6.2 9.8M3 13H6M3 13V10M13 13L9.8 9.8M13 13H10M13 13V10"/></g></svg>
<div class="b" style="left:1309px;top:475px;width:35px;height:28px;background:#fff;border:1px solid #e5e7eb;border-radius:6px;box-shadow:0 1px 2px rgba(0,0,0,.06)"></div>
<svg style="left:1318px;top:481px" width="16" height="16" viewBox="0 0 16 16"><g fill="none" stroke="#4b5563" stroke-width="1.2" stroke-linecap="round"><path d="M3 6V3H6M10 3H13V6M13 10V13H10M6 13H3V10"/></g></svg>
<div class="b" style="left:322px;top:726px;width:37px;height:23px;background:#fff;border:1px solid #e5e7eb;border-radius:4px;box-shadow:0 1px 2px rgba(0,0,0,.06)"></div>
<div class="t" style="left:330.00px;top:732.70px;font-size:10.992px;color:#374151;">83%</div>
<div class="b" style="left:230px;top:765px;width:1210px;height:87px;background:#fff"></div>
<div class="b" style="left:230px;top:765px;width:1210px;height:1px;background:#e5e7eb"></div>
<div class="b" style="left:252px;top:780px;width:1120px;height:58px;background:#fff;border:1px solid #e5e7eb;border-radius:12px"></div>
<div class="t" style="left:267.50px;top:796.05px;font-size:12.933px;color:#6b7280;">Type your message... (Enter to send, Shift+Enter for new line)</div>
<div class="b" style="left:1382px;top:802px;width:36px;height:36px;background:#9bbffb;border-radius:18px"></div>
<svg style="left:1391px;top:811px" width="18" height="18" viewBox="0 0 18 18"><path d="M15.5 2.5L2.5 7.6L8 10L10.4 15.5Z M15.5 2.5L8 10" fill="none" stroke="#fff" stroke-width="1.2" stroke-linejoin="round"/></svg>
</body></html>
